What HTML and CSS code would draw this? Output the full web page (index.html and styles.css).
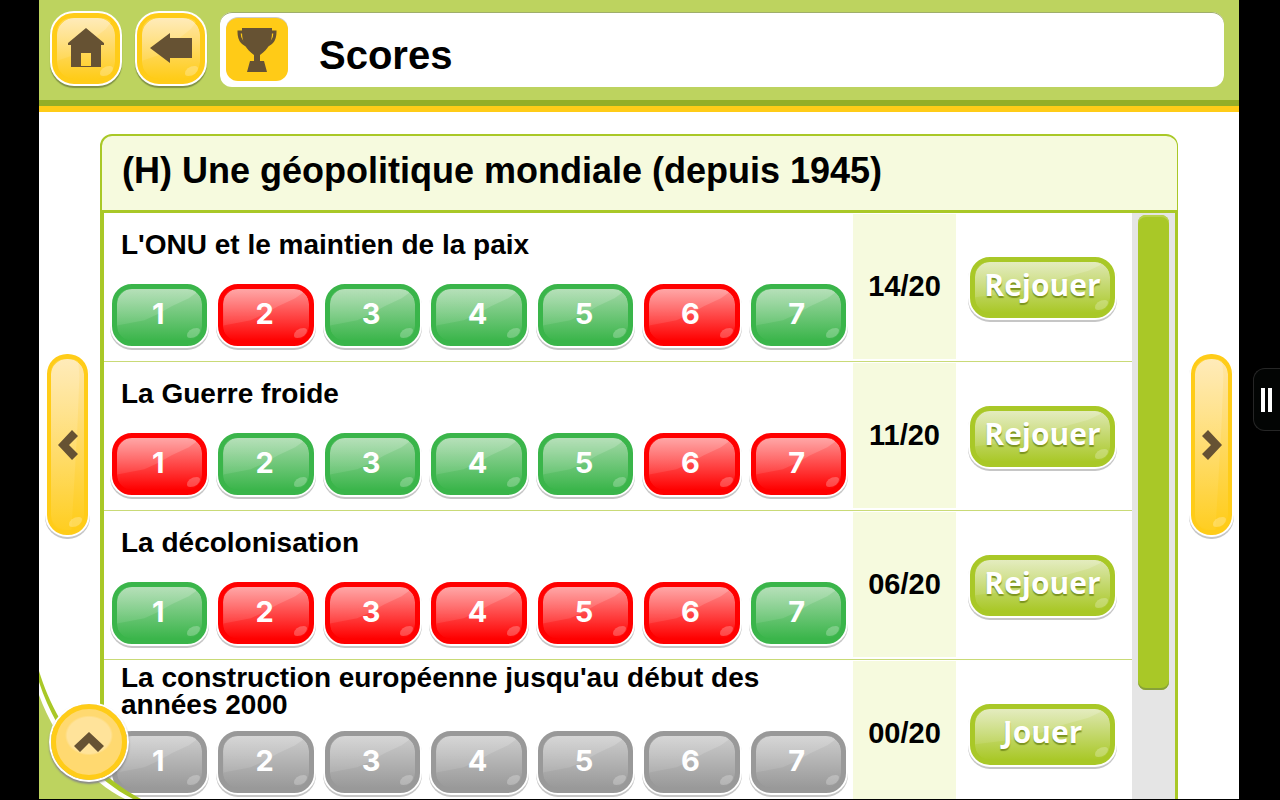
FILE: index.html
```html
<!DOCTYPE html>
<html lang="fr">
<head>
    <meta charset="UTF-8">
    <meta name="viewport" content="width=device-width, initial-scale=1.0">
    <title>Scores</title>
    <link rel="stylesheet" href="styles.css">
</head>
<body>
    <div class="app">
        <header class="topbar">
            <button class="glossy square" aria-label="Accueil">
                <svg width="38" height="42" viewBox="0 0 38 42"><path fill="#665233" d="M19 1L37 16v2h-3v22H4V18H1v-2zM14 26v13h10V26z"/></svg>
            </button>
            <button class="glossy square" aria-label="Retour">
                <svg width="44" height="32" viewBox="0 0 44 32"><path fill="#665233" d="M1 16L21 1v5h22v20H21v5z"/></svg>
            </button>
            <div class="title">
                <span class="trophy">
                    <svg width="42" height="48" viewBox="0 0 42 48">
                        <path fill="none" stroke="#665233" stroke-width="3" d="M9 6H3c0 8 4 13 12 14M33 6h6c0 8-4 13-12 14"/>
                        <path fill="#665233" d="M6 2h30v4c0 11-4 17-12 23v6h4l3 11H11l3-11h4v-6C10 23 6 17 6 6z"/>
                    </svg>
                </span>
                <h1>Scores</h1>
            </div>
        </header>

        <main class="content">
            <nav class="side">
                <button class="glossy arrow" aria-label="Page précédente">
                    <svg width="22" height="32" viewBox="0 0 22 32"><path fill="#665233" d="M1 16L15 1l6 6-9 9 9 9-6 6z"/></svg>
                </button>
            </nav>

            <section class="panel">
                <h2>(H) Une géopolitique mondiale (depuis 1945)</h2>
                <div class="scroll">
                    <table>
                        <tbody>
                            <tr>
                                <td>
                                    <h3>L'ONU et le maintien de la paix</h3>
                                    <div class="levels">
                                        <button class="glossy green">1</button>
                                        <button class="glossy red">2</button>
                                        <button class="glossy green">3</button>
                                        <button class="glossy green">4</button>
                                        <button class="glossy green">5</button>
                                        <button class="glossy red">6</button>
                                        <button class="glossy green">7</button>
                                    </div>
                                </td>
                                <td class="score">14/20</td>
                                <td class="action"><button class="glossy play">Rejouer</button></td>
                            </tr>
                            <tr>
                                <td>
                                    <h3>La Guerre froide</h3>
                                    <div class="levels">
                                        <button class="glossy red">1</button>
                                        <button class="glossy green">2</button>
                                        <button class="glossy green">3</button>
                                        <button class="glossy green">4</button>
                                        <button class="glossy green">5</button>
                                        <button class="glossy red">6</button>
                                        <button class="glossy red">7</button>
                                    </div>
                                </td>
                                <td class="score">11/20</td>
                                <td class="action"><button class="glossy play">Rejouer</button></td>
                            </tr>
                            <tr>
                                <td>
                                    <h3>La décolonisation</h3>
                                    <div class="levels">
                                        <button class="glossy green">1</button>
                                        <button class="glossy red">2</button>
                                        <button class="glossy red">3</button>
                                        <button class="glossy red">4</button>
                                        <button class="glossy red">5</button>
                                        <button class="glossy red">6</button>
                                        <button class="glossy green">7</button>
                                    </div>
                                </td>
                                <td class="score">06/20</td>
                                <td class="action"><button class="glossy play">Rejouer</button></td>
                            </tr>
                            <tr>
                                <td>
                                    <h3>La construction européenne jusqu'au début des années 2000</h3>
                                    <div class="levels">
                                        <button class="glossy grey">1</button>
                                        <button class="glossy grey">2</button>
                                        <button class="glossy grey">3</button>
                                        <button class="glossy grey">4</button>
                                        <button class="glossy grey">5</button>
                                        <button class="glossy grey">6</button>
                                        <button class="glossy grey">7</button>
                                    </div>
                                </td>
                                <td class="score">00/20</td>
                                <td class="action"><button class="glossy play">Jouer</button></td>
                            </tr>
                        </tbody>
                    </table>
                    <div class="track"><div class="thumb"></div></div>
                </div>
            </section>

            <nav class="side right">
                <button class="glossy arrow" aria-label="Page suivante">
                    <svg width="22" height="32" viewBox="0 0 22 32"><path fill="#665233" d="M21 16L7 1 1 7l9 9-9 9 6 6z"/></svg>
                </button>
            </nav>
        </main>

        <!-- corner menu -->
        <div class="corner">
            <svg width="108" height="128" viewBox="0 0 108 128">
                <path fill="#a9c827" d="M0 0C14 46 46 98 102 128H0z"/>
                <path fill="#fff" d="M0 11C14 54 44 102 94 128H0z"/>
                <path fill="#bdd35f" d="M0 24C14 62 42 106 86 128H0z"/>
            </svg>
            <button class="round" aria-label="Ouvrir le menu">
                <svg width="32" height="22" viewBox="0 0 32 22"><path fill="#665233" d="M16 1L31 15l-6 6-9-9-9 9-6-6z"/></svg>
            </button>
        </div>
    </div>

    <button class="handle" aria-label="Volet"><i></i><i></i></button>
</body>
</html>
```
FILE: styles.css
```css
*{
    margin: 0;
    padding: 0;
    box-sizing: border-box;
}
body{
    background-color: #000;
    font-family: "Liberation Sans", Arial, sans-serif;
    font-weight: bold;
    color: #000;
    overflow: hidden;
}
.app{
    position: relative;
    display: flex;
    flex-direction: column;
    height: 100vh;
    margin: 0 41px 0 39px;
    background-color: #fff;
    border-bottom: 1px solid #000;
    overflow: hidden;
}
button{
    border: none;
    font: inherit;
    cursor: pointer;
}
svg{
    display: block;
}

/* header */
.topbar{
    display: flex;
    align-items: flex-start;
    gap: 13px;
    padding: 12px 15px 19px 11px;
    background-color: #bdd35f;
    border-bottom: 6px solid #ffcc18;
    box-shadow: inset 0 -6px #94ae27;
}
.title{
    flex: 1;
    display: flex;
    align-items: center;
    height: 75px;
    padding-left: 6px;
    background-color: #fff;
    border-radius: 12px;
    box-shadow: inset 0 1px #9fae6a;
}
.trophy{
    display: flex;
    align-items: center;
    justify-content: center;
    width: 62px;
    height: 63px;
    background-color: #ffcb17;
    border-radius: 12px;
    box-shadow: 0 -1px #ccc;
}
h1{
    margin-left: 31px;
    padding-top: 10px;
    font-size: 40px;
    line-height: 46px;
}

/* shiny buttons */
.glossy{
    --main: #ffcc18;
    --light: #ffe6a8;
    position: relative;
    z-index: 0;
    display: flex;
    align-items: center;
    justify-content: center;
    border: 5px solid var(--main);
    border-radius: 20px;
    background: linear-gradient(var(--light), var(--main)) padding-box, var(--main);
    box-shadow: 0 0 0 2px #fff, 0 2px 0 2px #c6c6c6;
    color: #fff;
}
.glossy::before{
    content: "";
    position: absolute;
    z-index: -1;
    inset: 0;
    border-radius: 14px;
    background: linear-gradient(rgba(255,255,255,.2), rgba(255,255,255,.04));
    clip-path: polygon(0 0, 91% 0, 93% 7%, 84% 18%, 64% 33%, 48% 48%, 32% 60%, 0 70%);
}
.glossy::after{
    content: "";
    position: absolute;
    z-index: -1;
    right: 2px;
    bottom: 3px;
    width: 13px;
    height: 10px;
    border-radius: 90% 30%;
    background-color: rgba(255,255,255,.25);
}
.green{
    --main: #3ab54a;
    --light: #a3d8a7;
}
.red{
    --main: #ff0000;
    --light: #ff9090;
}
.grey{
    --main: #999;
    --light: #ccc;
}
.play{
    --main: #a9c827;
    --light: #dde7af;
}
.square{
    width: 68px;
    height: 71px;
    margin: 1px 2px;
    border-radius: 22px;
    box-shadow: 0 0 0 2px #fff, 0 2px 1px 2px #7f9144;
}
.square svg{
    margin-bottom: 2px;
}

/* main area */
.content{
    flex: 1;
    display: grid;
    grid-template-columns: 61px 1fr 61px;
    min-height: 0;
}
.side{
    display: flex;
    align-items: center;
    padding: 0 8px 22px;
}
.side.right{
    justify-content: flex-end;
    padding-right: 7px;
}
.arrow{
    width: 41px;
    height: 181px;
    border-width: 5px 4px;
}
.arrow::before{
    clip-path: polygon(0 0, 82% 0, 86% 10%, 80% 40%, 62% 100%, 0 100%);
}
.panel{
    display: flex;
    flex-direction: column;
    min-height: 0;
    padding-top: 22px;
}
h2{
    height: 79px;
    padding: 13px 20px;
    background-color: #f6fade;
    border: 2px solid #a9c827;
    border-bottom-width: 3px;
    border-right-width: 1px;
    border-radius: 12px 12px 0 0;
    font-size: 36px;
    line-height: 44px;
    white-space: nowrap;
}
.scroll{
    flex: 1;
    display: flex;
    align-items: flex-start;
    min-height: 0;
    border: solid #a9c827;
    border-width: 0 3px 0 4px;
    overflow: hidden;
}
table{
    flex: 1;
    border-spacing: 0;
    table-layout: fixed;
}
tr{
    height: 149px;
}
td{
    padding: 0 7px 0 8px;
    border-bottom: 1px solid #c9da77;
    vertical-align: top;
}
h3{
    display: flex;
    align-items: center;
    height: 62px;
    margin-bottom: 9px;
    padding: 0 60px 0 9px;
    font-size: 28px;
    line-height: 27px;
}
.levels{
    display: grid;
    grid-template-columns: repeat(7, 1fr);
    gap: 11px;
}
.levels .glossy{
    height: 62px;
    padding: 0 3px 3px 0;
    font-family: Inter, sans-serif;
    font-size: 29px;
}
.score{
    width: 103px;
    padding: 1px 0 2px;
    background: #f6fade content-box;
    font-size: 29px;
    text-align: center;
    vertical-align: middle;
}
.action{
    width: 176px;
    padding: 0 14px;
    vertical-align: middle;
}
.play{
    width: 145px;
    height: 61px;
    padding-bottom: 6px;
    font-family: "Open Sans", sans-serif;
    font-size: 30px;
    font-weight: 700;
    text-shadow: 0 2px 1px #7c9420;
}
.track{
    align-self: stretch;
    width: 43px;
    padding: 2px 6px 0;
    background-color: #e5e5e5;
}
.thumb{
    height: 475px;
    background-color: #a9c827;
    border-radius: 8px;
    box-shadow: inset 0 -2px #87a03a, inset 0 2px #b9d24c;
}

/* corner menu */
.corner{
    position: absolute;
    z-index: 1;
    left: 0;
    bottom: 0;
}
.round{
    position: absolute;
    left: 12px;
    bottom: 19px;
    display: flex;
    align-items: center;
    justify-content: center;
    width: 76px;
    height: 76px;
    border: 5px solid #ffcc18;
    border-radius: 50%;
    background: radial-gradient(24px 20px at 50% 40%, #ffe39a 90%, #ffd970 100%);
    box-shadow: 0 0 0 2px #fff, 0 2px 2px 2px #888;
}

/* side drawer handle */
.handle{
    position: absolute;
    right: 0;
    top: 368px;
    display: flex;
    gap: 3px;
    align-items: center;
    width: 27px;
    height: 63px;
    padding-left: 7px;
    border: 1px solid #262626;
    border-right: none;
    border-radius: 12px 0 0 12px;
    background-color: #030504;
}
.handle i{
    width: 4px;
    height: 24px;
    background-color: #fff;
}
```
